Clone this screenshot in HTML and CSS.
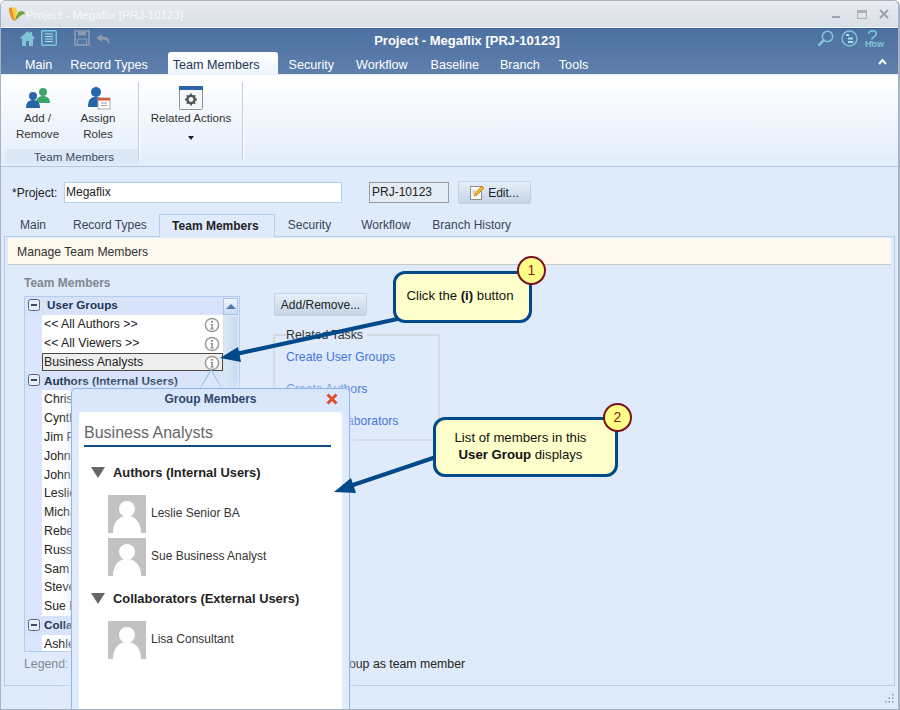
FILE: index.html
```html
<!DOCTYPE html>
<html lang="en">
<head>
<meta charset="utf-8">
<title>Project - Megaflix [PRJ-10123]</title>
<link rel="stylesheet" href="styles.css">
</head>
<body>
<svg class="defs" width="0" height="0" aria-hidden="true">
  <symbol id="info" viewBox="0 0 16 16">
    <circle cx="8" cy="8" r="6.6" fill="#fff" stroke="#9a9a9a" stroke-width="1.5"/>
    <circle cx="8" cy="4.8" r="1.1" fill="#858585"/>
    <path d="M6.6 7h2.2v4.4h1v1H6.4v-1h1V8H6.6z" fill="#858585"/>
  </symbol>
  <symbol id="avatar" viewBox="0 0 38 38">
    <rect width="38" height="38" fill="#c2c2c2"/>
    <circle cx="19" cy="14" r="8" fill="#fff"/>
    <path d="M5 38c0-11 6-17 14-17s14 6 14 17z" fill="#fff"/>
  </symbol>
  <symbol id="minus" viewBox="0 0 12 12">
    <rect x=".5" y=".5" width="11" height="11" rx="2" fill="#e8edf6" stroke="#59677f"/>
    <rect x="3" y="5" width="6" height="2" fill="#3d4a60"/>
  </symbol>
</svg>

<div class="window">
  <div class="titlebar">
    <svg class="logo" width="17" height="15" viewBox="0 0 17 15">
      <path d="M1 4C0 1 3-1 4 1c1 3 2 8 3 13C4 14 2 9 1 4z" fill="#ee8f2c"/>
      <path d="M4 1c2-2 5 0 5 3 0 4-1 7-2 10C6 10 4 5 4 1z" fill="#f6cf45"/>
      <path d="M7 14c1-5 3-10 6-10 2 0 4 1 4 3-4 0-7 4-10 7z" fill="#76a535"/>
    </svg>
    <span class="title-text">Project - Megaflix [PRJ-10123]</span>
    <div class="win-controls">
      <span class="wc-min"></span>
      <span class="wc-max"></span>
      <svg width="10" height="10" viewBox="0 0 10 10"><path d="M1 1l8 8M9 1l-8 8" stroke="#9aa3ae" stroke-width="2"/></svg>
    </div>
  </div>

  <div class="appbar">
    <div class="appbar-top">
      <div class="quick">
        <svg width="17" height="17" viewBox="0 0 17 17"><path d="M8.5 1L0.5 8.5h2.5V16h4v-5h3v5h4V8.500h2.500L13 5V2h-2v1.200z" fill="#7fc4d6"/></svg>
        <svg class="q-book" width="16" height="16" viewBox="0 0 16 16"><rect x=".7" y=".7" width="14.600" height="14.600" rx="1" fill="#4f7fa8" stroke="#7fc4d6" stroke-width="1.400"/><path d="M4 4h8M4 6.500h8M4 9h8M4 11.500h8" stroke="#a5dce8"/></svg>
        <svg class="q-save" width="16" height="16" viewBox="0 0 16 16"><path d="M1 1h14v14H1z" fill="none" stroke="#8c9bb0" stroke-width="1.600"/><path d="M4 1.500h8v4H4z" fill="#8c9bb0"/><path d="M3.500 9h9v6h-9z" fill="none" stroke="#8c9bb0"/></svg>
        <svg class="q-undo" width="15" height="11" viewBox="0 0 15 11"><path d="M6 0L0 4l6 4V5.500c4 0 6 1.500 7 5 1.500-5-1-8-7-8z" fill="#8c9bb0"/></svg>
      </div>
      <div class="app-title">Project - Megaflix [PRJ-10123]</div>
      <div class="tools">
        <svg width="17" height="17" viewBox="0 0 17 17"><circle cx="10.500" cy="6.500" r="5.200" fill="none" stroke="#7fc4d6" stroke-width="1.600"/><path d="M6.500 10.500L1.500 15.500" stroke="#7fc4d6" stroke-width="2.600"/></svg>
        <svg width="17" height="17" viewBox="0 0 17 17"><circle cx="8.500" cy="8.500" r="7.500" fill="none" stroke="#7fc4d6" stroke-width="1.400"/><path d="M5 5h3M7 8.500h5M7 12h5" stroke="#a5e0ea" stroke-width="1.800"/></svg>
        <div class="how"><span class="how-q">?</span><span class="how-t">How</span></div>
      </div>
    </div>
    <div class="ribbon-tabs">
      <span class="rtab rtab-main">Main</span>
      <span class="rtab">Record Types</span>
      <span class="rtab rtab-on">Team Members</span>
      <span class="rtab rtab-sec">Security</span>
      <span class="rtab rtab-wf">Workflow</span>
      <span class="rtab rtab-base">Baseline</span>
      <span class="rtab">Branch</span>
      <span class="rtab">Tools</span>
      <svg class="collapse" width="9" height="7" viewBox="0 0 9 7"><path d="M1 6l3.500-4L8 6" fill="none" stroke="#fff" stroke-width="2"/></svg>
    </div>
  </div>

  <div class="ribbon">
    <div class="rgroup rgroup-team">
      <div class="rbtns">
        <div class="rbtn rbtn-add">
          <svg width="26" height="22" viewBox="0 0 26 22">
            <circle cx="18" cy="5" r="4" fill="#3da66f"/><path d="M11 16c0-5 3-7 7-7s7 2 7 7z" fill="#3da66f"/>
            <circle cx="8" cy="9" r="4" fill="#2565a8"/><path d="M1 21c0-6 3-8 7-8s7 2 7 8z" fill="#2565a8"/>
          </svg>
          <span>Add /<br>Remove</span>
        </div>
        <div class="rbtn rbtn-assign">
          <svg width="26" height="24" viewBox="0 0 26 24">
            <circle cx="11" cy="6" r="5" fill="#2565a8"/><path d="M3 21c0-8 3-10 8-10s8 2 8 10z" fill="#2565a8"/>
            <rect x="13" y="12" width="12" height="11" fill="#fff" stroke="#aaa"/><rect x="13" y="12" width="12" height="2.500" fill="#d9583a"/>
            <path d="M16 17h6M16 19.500h6" stroke="#999"/>
          </svg>
          <span>Assign<br>Roles</span>
        </div>
      </div>
      <div class="rgroup-label">Team Members</div>
    </div>
    <div class="rsep"></div>
    <div class="rgroup rgroup-rel">
      <div class="rbtn">
        <svg width="24" height="24" viewBox="0 0 24 24">
          <rect x=".5" y=".5" width="23" height="23" rx="1" fill="#f6f7f9" stroke="#8a8f98"/>
          <rect x="0" y="0" width="24" height="4" fill="#2f62a6"/>
          <circle cx="12" cy="13.500" r="3.600" fill="none" stroke="#555" stroke-width="2.400"/>
          <path d="M12 7.500v2.400M12 17v2.400M6 13.500h2.400M15.600 13.500H18M7.800 9.300l1.700 1.700M14.500 16l1.700 1.700M16.200 9.300L14.500 11M9.500 16l-1.700 1.700" stroke="#555" stroke-width="1.800"/>
        </svg>
        <span>Related Actions</span>
        <i class="caret"></i>
      </div>
    </div>
    <div class="rsep"></div>
  </div>

  <div class="form-row">
    <label class="plabel">*Project:</label>
    <div class="pinput">Megaflix</div>
    <div class="pcode">PRJ-10123</div>
    <div class="btn btn-edit">
      <svg width="15" height="15" viewBox="0 0 15 15">
        <rect x=".5" y="1.500" width="11" height="13" fill="#fbfbf6" stroke="#8d8d8d"/>
        <path d="M4 11l1-3 7-7 2 2-7 7z" fill="#f0b429" stroke="#c9701a" stroke-width=".7"/>
        <path d="M2.500 6h3M2.500 8h2" stroke="#aaa"/>
      </svg>
      <span>Edit...</span>
    </div>
  </div>

  <div class="tabs">
    <span class="tab">Main</span>
    <span class="tab">Record Types</span>
    <span class="tab tab-on">Team Members</span>
    <span class="tab tab-sec">Security</span>
    <span class="tab tab-wf">Workflow</span>
    <span class="tab">Branch History</span>
  </div>

  <div class="panel">
    <div class="notice">Manage Team Members</div>
    <div class="columns">
      <div class="col-list">
        <div class="list-title">Team Members</div>
        <div class="list">
          <div class="list-main">
            <div class="lhead lhead-first"><svg class="m" width="12" height="12"><use href="#minus"/></svg><b>User Groups</b></div>
            <div class="lrow">&lt;&lt; All Authors &gt;&gt;<svg class="i" width="16" height="16"><use href="#info"/></svg></div>
            <div class="lrow">&lt;&lt; All Viewers &gt;&gt;<svg class="i" width="16" height="16"><use href="#info"/></svg></div>
            <div class="lrow lrow-sel">Business Analysts<svg class="i" width="16" height="16"><use href="#info"/></svg></div>
            <div class="lhead"><svg class="m" width="12" height="12"><use href="#minus"/></svg><b>Authors (Internal Users)</b></div>
            <div class="lrow">Chris Administrator</div>
            <div class="lrow">Cynthia Developer</div>
            <div class="lrow">Jim Project Manager</div>
            <div class="lrow">John Developer</div>
            <div class="lrow">John Tester</div>
            <div class="lrow">Leslie Senior BA</div>
            <div class="lrow">Michael Architect</div>
            <div class="lrow">Rebecca Tester</div>
            <div class="lrow">Russell Developer</div>
            <div class="lrow">Sam Reviewer</div>
            <div class="lrow">Steve Developer</div>
            <div class="lrow">Sue Business Analyst</div>
            <div class="lhead"><svg class="m" width="12" height="12"><use href="#minus"/></svg><b>Collaborators (External)</b></div>
            <div class="lrow">Ashley Consultant</div>
          </div>
          <div class="scroll">
            <div class="scroll-btn"><i></i></div>
            <div class="scroll-track"></div>
          </div>
        </div>
        <div class="legend"><span class="legend-l">Legend:</span><span class="legend-t">Includes user group as team member</span></div>
      </div>
      <div class="col-side">
        <div class="btn btn-add">Add/Remove...</div>
        <fieldset class="tasks">
          <legend>Related Tasks</legend>
          <a>Create User Groups</a>
          <a>Create Authors</a>
          <a>Create Collaborators</a>
        </fieldset>
      </div>
    </div>
  </div>

  <div class="statusbar">
    <svg width="10" height="10" viewBox="0 0 10 10"><path d="M8 1h1.500v1.500H8zM4.500 4.500H6V6H4.500zM8 4.500h1.500V6H8zM1 8h1.500v1.500H1zM4.500 8H6v1.500H4.500zM8 8h1.500v1.500H8z" fill="#8d98a6"/></svg>
  </div>

  <svg class="pointer" width="60" height="24" viewBox="0 0 60 24">
    <path d="M17 23L30 1l13 22z" fill="#dbe8fb" stroke="#8fb5ea"/>
  </svg>

  <div class="popup">
    <div class="popup-head">
      <span>Group Members</span>
      <svg class="popup-x" width="12" height="12" viewBox="0 0 12 12"><path d="M1.500 1.500l9 9M10.500 1.500l-9 9" stroke="#d9502a" stroke-width="3"/></svg>
    </div>
    <div class="popup-body">
      <div class="popup-title">Business Analysts</div>
      <div class="sect"><i class="tri"></i>Authors (Internal Users)</div>
      <div class="person"><svg width="38" height="38"><use href="#avatar"/></svg><span>Leslie Senior BA</span></div>
      <div class="person"><svg width="38" height="38"><use href="#avatar"/></svg><span>Sue Business Analyst</span></div>
      <div class="sect sect-2"><i class="tri"></i>Collaborators (External Users)</div>
      <div class="person"><svg width="38" height="38"><use href="#avatar"/></svg><span>Lisa Consultant</span></div>
    </div>
  </div>

  <svg class="arrows" width="900" height="710" viewBox="0 0 900 710">
    <path d="M402 318L236 354" stroke="#004a8a" stroke-width="4" fill="none"/>
    <path d="M220 358L238 347l3 15z" fill="#004a8a"/>
    <path d="M436 457L350 486" stroke="#004a8a" stroke-width="4" fill="none"/>
    <path d="M334 492L351 478l5 15z" fill="#004a8a"/>
  </svg>

  <div class="callout callout-1"><span>Click the <b>(i)</b> button</span><span class="badge">1</span></div>
  <div class="callout callout-2"><span>List of members in this<br><b>User Group</b> displays</span><span class="badge">2</span></div>
</div>
</body>
</html>
```

FILE: styles.css
```css
* { box-sizing: border-box; }
html, body { margin: 0; padding: 0; }
body { width: 900px; height: 710px; overflow: hidden; font-family: "Liberation Sans", Arial, sans-serif; font-size: 12px; color: #222; background: #fff; }
.defs { position: absolute; }

.window { position: relative; width: 900px; height: 710px; overflow: hidden; display: flex; flex-direction: column; background: #dfeafa; border: 1px solid #a7b2c2; border-radius: 6px 6px 0 0; border-right-width: 2px; }

.titlebar { height: 27px; flex: none; display: flex; align-items: center; padding-left: 7px; background: linear-gradient(#e9ecf1, #d9dfe8); border-bottom: 1px solid #f3f5f8; }
.title-text { margin-left: 1px; color: #f7f8fa; font-size: 11.600px; }
.win-controls { margin-left: auto; display: flex; align-items: center; gap: 12px; padding-right: 9px; }
.wc-min { width: 8px; height: 2px; background: #9aa3ae; margin-top: 6px; }
.wc-max { width: 10px; height: 9px; border: 1px solid #a9b0ba; border-top-width: 3px; margin-left: 5px; }

.appbar { height: 46px; flex: none; display: flex; flex-direction: column; background: linear-gradient(#4d71a1, #5f7fac); border-top: 1px solid #3e6396; }
.appbar-top { height: 23px; position: relative; display: flex; align-items: flex-start; }
.quick { display: flex; align-items: flex-start; padding: 1px 0 0 18px; }
.q-book { margin-left: 5px; }
.q-save { margin-left: 17px; }
.q-undo { margin: 4px 0 0 6px; }
.app-title { position: absolute; left: 0; width: 932px; top: 4px; text-align: center; color: #fff; font-weight: bold; font-size: 13px; }
.tools { margin-left: auto; display: flex; gap: 7px; padding: 1px 15px 0 0; }
.how { position: relative; width: 18px; height: 18px; color: #7fc4d6; }
.how-q { position: absolute; left: 2px; top: -4px; font-size: 19px; }
.how-t { position: absolute; left: 0; top: 9px; font-size: 9px; font-weight: bold; }

.ribbon-tabs { flex: 1; display: flex; align-items: flex-end; padding-left: 24px; gap: 19px; position: relative; }
.rtab { color: #fff; font-size: 12.600px; height: 22px; padding-top: 3px; line-height: 20px; }
.rtab-main { margin-right: -1px; }
.rtab-on { color: #243752; background: linear-gradient(#fff, #eef5fd); border-radius: 3px 3px 0 0; padding: 3px 18px 0 5px; margin: 0 -8px 0 1px; }
.rtab-sec { margin-right: 3px; }
.rtab-wf { margin-right: 4px; }
.rtab-base { margin-right: 2px; }
.collapse { position: absolute; right: 11px; top: 6px; }

.ribbon { height: 93px; flex: none; display: flex; background: linear-gradient(#fff, #e2edfb); border-top: 1px solid #e8eff9; border-bottom: 1px solid #b9c8dc; padding: 3px 0 0 4px; font-size: 11.600px; }
.rgroup { height: 86px; display: flex; flex-direction: column; }
.rgroup-team { width: 133px; }
.rbtns { display: flex; flex: 1; }
.rbtn { display: flex; flex-direction: column; align-items: center; color: #333; line-height: 16px; text-align: center; padding-top: 8px; }
.rbtn svg { height: 24px; }
.rbtn-add { width: 65px; }
.rbtn-assign { width: 56px; }
.rgroup-label { height: 15px; line-height: 15px; padding-left: 5px; text-align: center; color: #3a4a60; background: #dde8f7; margin-top: -6px; }
.rsep { width: 2px; height: 78px; margin-top: 4px; background: #c3ccd8; border-right: 1px solid #fff; }
.rgroup-rel { width: 102px; align-items: center; }
.caret { display: block; margin-top: 10px; width: 0; height: 0; border: 3px solid transparent; border-top: 4px solid #222; border-bottom: 0; }

.form-row { height: 47px; flex: none; display: flex; align-items: center; padding: 4px 0 0 11px; }
.plabel { width: 52px; font-size: 12px; }
.pinput { width: 278px; height: 21px; line-height: 19px; padding-left: 1px; border: 1px solid #b4cfec; background: #fff; }
.pcode { width: 80px; height: 21px; line-height: 19px; padding-left: 2px; margin-left: 27px; border: 1px solid #9a9a9a; background: #e3ebf5; }
.btn { display: flex; align-items: center; justify-content: center; height: 23px; border: 1px solid #c0d2e6; border-radius: 2px; background: linear-gradient(#e6eff9, #c4d4e6); color: #222; }
.btn-edit { width: 73px; margin-left: 9px; gap: 3px; }

.tabs { height: 22px; flex: none; display: flex; align-items: flex-end; padding-left: 19px; }
.tab { height: 22px; line-height: 22px; color: #3a4556; margin-right: 27px; }
.tab-on { font-weight: bold; color: #222; width: 116px; padding-right: 3px; text-align: center; margin: 0 13px 0 -15px; background: #dfeafa; border: 1px solid #b4cfec; border-bottom: 0; height: 23px; position: relative; top: 1px; }
.tab-sec { margin-right: 30px; }
.tab-wf { margin-right: 22px; }

.panel { height: 450px; flex: none; margin: 0 3px; border: 1px solid #b4cfec; background: #dfeafb; padding: 1px 3px 0; }
.notice { height: 27px; line-height: 26px; padding: 1px 0 0 9px; background: #fef9ee; border-bottom: 1px solid #c9c9c5; color: #333; font-size: 12.200px; }
.columns { display: flex; padding: 11px 0 0 16px; }
.col-list { width: 249px; flex: none; }
.list-title { height: 20px; color: #808890; font-weight: bold; }
.list { width: 216px; height: 356px; display: flex; border: 1px solid #b2cdf0; background: #dbe5fb; overflow: hidden; font-size: 12.300px; }
.list-main { width: 199px; }
.lhead { height: 19px; display: flex; align-items: center; padding: 0 0 1px 3px; color: #1f3658; background: #d8e3fa; font-size: 11.700px; }
.lhead b { margin-left: 4px; }
.lhead-first { height: 18px; padding-bottom: 3px; }
.lhead-first b { margin-left: 7px; }
.lrow { position: relative; height: 18.8px; line-height: 18.800px; margin-left: 17px; padding-left: 2px; background: #fff; white-space: nowrap; overflow: hidden; }
.lrow-sel { background: #eee; outline: 1px solid #4a4a4a; outline-offset: -1px; }
.lrow .i { position: absolute; right: 3px; top: 2px; }
.scroll { width: 16px; }
.scroll-btn { height: 17px; margin: 1px 1px 0 0; border: 1px solid #a9c5ea; background: linear-gradient(#f2f6fc, #c9dbf3); display: flex; align-items: center; justify-content: center; }
.scroll-btn i { width: 0; height: 0; border: 5px solid transparent; border-bottom: 5px solid #4b79b4; border-top: 0; }
.scroll-track { height: 340px; margin: 1px 1px 0 0; background: linear-gradient(90deg, #dbe7f7, #c9dbf2); border: 1px solid #d4e2f5; }
.legend { display: flex; padding-top: 5px; white-space: nowrap; font-size: 12.300px; }
.legend-l { color: #808890; }
.legend-t { margin-left: 193px; color: #222; }

.col-side { width: 166px; padding-top: 17px; }
.btn-add { width: 93px; height: 23px; margin-left: 1px; }
.tasks { margin: 13px 0 0; padding: 8px 0 0 11px; width: 167px; height: 112px; border: 2px solid #d4dae2; border-radius: 3px; }
.tasks legend { padding: 0 4px 0 0; margin-left: 0; color: #333; line-height: 12px; font-size: 12.300px; }
.tasks a { display: block; height: 32px; line-height: 16px; color: #3f78d8; font-size: 12.200px; }

.statusbar { flex: 1; display: flex; align-items: flex-end; justify-content: flex-end; padding: 0 4px 6px 0; }

.pointer { position: absolute; left: 180px; top: 368px; }
.popup { position: absolute; left: 70px; top: 387px; width: 279px; height: 340px; padding: 0 7px; border: 1px solid #8fb5ea; border-radius: 4px 4px 0 0; background: linear-gradient(#d8e6fb, #e0ebfb 60px); box-shadow: 0 0 14px rgba(223, 234, 250, .95); }
.popup-head { height: 23px; padding-bottom: 3px; position: relative; display: flex; align-items: center; justify-content: center; color: #30466a; font-weight: bold; }
.popup-x { position: absolute; right: 4px; top: 4px; }
.popup-body { height: 320px; background: #fff; border-radius: 3px 3px 0 0; padding: 9px 10px 0 5px; }
.popup-title { height: 26px; font-size: 16px; color: #666; line-height: 24px; border-bottom: 2px solid #124a84; margin-bottom: 16px; width: 247px; }
.sect { display: flex; align-items: center; height: 18px; font-size: 12.900px; font-weight: bold; color: #222; margin: 0 0 14px 7px; }
.sect-2 { margin-top: 13px; margin-bottom: 14px; }
.tri { width: 0; height: 0; margin-right: 8px; border-style: solid; border-width: 11px 7px 0; border-color: #666 transparent transparent; }
.person { display: flex; align-items: center; height: 38px; margin: 0 0 5px 24px; color: #333; }
.person span { margin: -3px 0 0 5px; }

.arrows { position: absolute; left: -1px; top: -1px; pointer-events: none; }

.callout { position: absolute; background: #ffc; border: 3.500px solid #004a8a; border-radius: 12px; color: #111; font-size: 13.200px; text-align: center; display: flex; align-items: center; justify-content: center; line-height: 17px; white-space: pre-wrap; }
.callout-1 { left: 392px; top: 270px; width: 139px; height: 52px; padding: 0 5px 4px 0; }
.callout-2 { left: 432px; top: 416px; width: 185px; height: 60px; padding: 0 10px 2px 0; }
.badge { position: absolute; width: 29px; height: 29px; line-height: 25px; border: 2px solid #7a1020; border-radius: 50%; background: #ff8; color: #8a1a20; font-size: 14px; text-align: center; }
.callout-1 .badge { right: -17px; top: -18px; }
.callout-2 .badge { right: -17px; top: -17px; }
```
